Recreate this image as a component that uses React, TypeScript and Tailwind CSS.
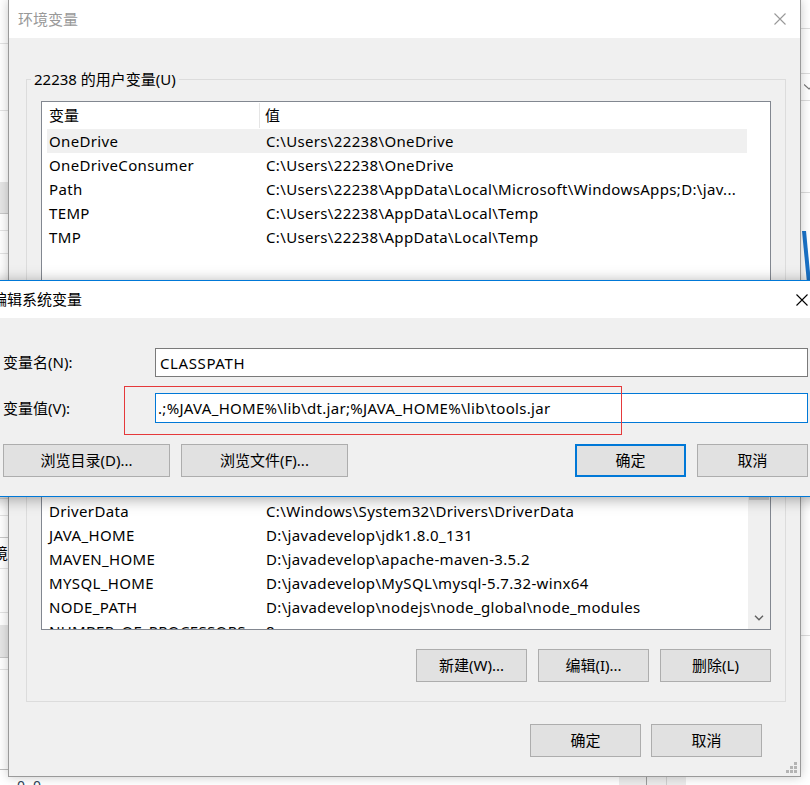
import React from 'react';

const userVars = [
  { name: 'OneDrive', value: 'C:\\Users\\22238\\OneDrive' },
  { name: 'OneDriveConsumer', value: 'C:\\Users\\22238\\OneDrive' },
  { name: 'Path', value: 'C:\\Users\\22238\\AppData\\Local\\Microsoft\\WindowsApps;D:\\jav...' },
  { name: 'TEMP', value: 'C:\\Users\\22238\\AppData\\Local\\Temp' },
  { name: 'TMP', value: 'C:\\Users\\22238\\AppData\\Local\\Temp' },
];

const systemVars = [
  { name: 'ComSpec', value: 'C:\\WINDOWS\\system32\\cmd.exe' },
  { name: 'DriverData', value: 'C:\\Windows\\System32\\Drivers\\DriverData' },
  { name: 'JAVA_HOME', value: 'D:\\javadevelop\\jdk1.8.0_131' },
  { name: 'MAVEN_HOME', value: 'D:\\javadevelop\\apache-maven-3.5.2' },
  { name: 'MYSQL_HOME', value: 'D:\\javadevelop\\MySQL\\mysql-5.7.32-winx64' },
  { name: 'NODE_PATH', value: 'D:\\javadevelop\\nodejs\\node_global\\node_modules' },
  { name: 'NUMBER_OF_PROCESSORS', value: '8' },
  { name: 'OS', value: 'Windows_NT' },
];

function CloseX({ color }: { color: string }) {
  return (
    <svg width="12" height="12" viewBox="0 0 12 12" fill="none" stroke={color} strokeWidth="1.1">
      <path d="M0.5 0.5 L11.5 11.5 M11.5 0.5 L0.5 11.5" />
    </svg>
  );
}

function WinButton({ label, width = 'w-[111px]', primary = false }: { label: string; width?: string; primary?: boolean }) {
  return (
    <button
      className={`${width} h-[33px] bg-[#e1e1e1] text-[15px] text-black flex items-center justify-center ${
        primary ? 'border-2 border-[#0078d7]' : 'border border-[#adadad]'
      }`}
    >
      {label}
    </button>
  );
}

type Row = { name: string; value: string };

function VarList({ rows, selected, scroll, height }: { rows: Row[]; selected?: number; scroll?: boolean; height: string }) {
  return (
    <div className={`${height} border border-[#828790] bg-white flex overflow-hidden`}>
      <div className="flex-1 min-w-0 pl-[5px] overflow-hidden">
        <div className="w-[700px] h-[27px] flex items-center">
          <div className="w-[213px] h-[25px] pl-[2px] flex items-center border-r border-[#e5e5e5]">变量</div>
          <div className="pl-[5px]">值</div>
        </div>
        {rows.map((r, i) => (
          <div
            key={r.name}
            className={`w-[700px] h-[24px] flex items-center whitespace-nowrap tracking-[0.35px] ${i === selected ? 'bg-[#f0f0f0]' : ''}`}
          >
            <div className="w-[217px] pl-[2px] overflow-hidden">{r.name}</div>
            <div className="pl-[2px] overflow-hidden">{r.value}</div>
          </div>
        ))}
      </div>
      <div className={`w-[22px] h-full flex flex-col ${scroll ? 'bg-[#f0f0f0]' : 'bg-white'}`}>
        {scroll && (
          <>
            <div className="h-[22px]" />
            <div className="h-[30px] mx-[1px] bg-[#cdcdcd]" />
            <div className="flex-1" />
            <div className="h-[22px] flex items-center justify-center">
              <svg width="10" height="6" viewBox="0 0 10 6" fill="none" stroke="#606060" strokeWidth="1.4">
                <path d="M1 0.8 L5 4.8 L9 0.8" />
              </svg>
            </div>
          </>
        )}
      </div>
    </div>
  );
}

function LeftBackdrop() {
  return (
    <div className="absolute left-[-200px] top-0 w-[208px] h-[785px] bg-white flex flex-col">
      <div className="h-[44px] border-b border-[#e3e3e3]" />
      <div className="h-[67px] border-b border-[#e3e3e3]" />
      <div className="h-[71px]" />
      <div className="h-[32px] bg-[#e6e6e6] border-b border-[#c8c8c8]" />
      <div className="h-[17px] border-b border-[#e3e3e3]" />
      <div className="h-[23px] border-b border-[#e3e3e3]" />
      <div className="h-[245px] border-b border-[#e3e3e3]" />
      <div className="h-[17px] border-b border-[#e3e3e3]" />
      <div className="h-[22px] border-b border-[#c9c9c9]" />
      <div className="h-[31px] border-b border-[#e3e3e3] flex items-center justify-end text-[15px] text-black">境</div>
      <div className="h-[44px] border-b border-[#e3e3e3]" />
      <div className="h-[12px]" />
      <div className="h-[33px] bg-[#e6e6e6] border-b border-[#c8c8c8]" />
      <div className="h-[12px] border-b border-[#e3e3e3]" />
      <div className="h-[100px] border-b border-[#bdbdbd]" />
    </div>
  );
}

function RightBackdrop() {
  return (
    <div className="absolute left-[801px] top-0 w-[40px] h-[785px] bg-white flex flex-col">
      <div className="h-[29px] border-b border-[#dcdcdc]" />
      <div className="h-[45px] border-b border-[#dcdcdc]" />
      <div className="h-[27px] border-b border-[#dcdcdc] pl-[3px] pt-[10px]">
        <svg width="10" height="6" viewBox="0 0 10 6" fill="none" stroke="#777" strokeWidth="1.2">
          <path d="M0 0.5 L5 5 L10 0.5" />
        </svg>
      </div>
      <div className="h-[92px] border-b border-[#dcdcdc]" />
      <div className="h-[38px]" />
      <svg width="12" height="52" viewBox="0 0 12 52">
        <polygon points="1,0 5,0 10,52 6,52" fill="#1a73c9" />
      </svg>
      <div className="h-[353px] border-b border-[#dcdcdc]" />
    </div>
  );
}

function BottomBackdrop() {
  return (
    <div className="absolute left-0 top-[777px] w-[810px] h-[8px] flex">
      <div className="w-[17px]" />
      <div className="w-[40px] h-[8px] overflow-hidden">
        <div className="text-[14px] leading-[14px] text-[#2b3f57] mt-[2px] tracking-[8px]">00</div>
      </div>
      <div className="w-[562px]" />
      <div className="w-[27px] bg-[#ececec]" />
      <div className="w-[1px] bg-[#9c9c9c]" />
      <div className="w-[19px] bg-[#ececec]" />
      <div className="w-[1px] bg-[#cfcfcf]" />
      <div className="w-[19px] bg-[#ececec]" />
      <div className="flex-1" />
    </div>
  );
}

function EnvDialog() {
  return (
    <div className="absolute left-[8px] top-0 w-[793px] h-[777px] border-x border-b border-[#9a9a9a] bg-[#f0f0f0] shadow-[0_0_10px_rgba(0,0,0,0.22)] flex flex-col">
      <div className="h-[38px] bg-white flex items-center justify-between pl-[9px] text-[#999]">
        <span>环境变量</span>
        <div className="w-[40px] flex justify-center">
          <CloseX color="#999" />
        </div>
      </div>
      <div className="pl-[17px] pr-[14px] flex flex-col">
        <fieldset className="mt-[31px] h-[333px] border border-[#dcdcdc] px-[14px]">
          <legend className="ml-[-10px] px-[3px] leading-[20px]">22238 的用户变量(U)</legend>
          <div className="mt-[12px]">
            <VarList rows={userVars} selected={0} height="h-[220px]" />
          </div>
        </fieldset>
        <fieldset className="mt-[13px] border border-[#dcdcdc] px-[14px] pb-[19px]">
          <legend className="ml-[-10px] px-[3px] leading-[20px]">系统变量(S)</legend>
          <div className="mt-[12px]">
            <VarList rows={systemVars} scroll height="h-[183px]" />
          </div>
          <div className="mt-[19px] flex justify-end gap-[11px]">
            <WinButton label="新建(W)..." />
            <WinButton label="编辑(I)..." />
            <WinButton label="删除(L)" />
          </div>
        </fieldset>
        <div className="mt-[22px] flex justify-end gap-[10px] pr-[24px]">
          <WinButton label="确定" />
          <WinButton label="取消" />
        </div>
      </div>
      <svg className="absolute right-[3px] bottom-[3px]" width="11" height="11" viewBox="0 0 11 11" fill="#b4b4b4">
        <rect x="8" y="0" width="3" height="3" />
        <rect x="4" y="4" width="3" height="3" />
        <rect x="8" y="4" width="3" height="3" />
        <rect x="0" y="8" width="3" height="3" />
        <rect x="4" y="8" width="3" height="3" />
        <rect x="8" y="8" width="3" height="3" />
      </svg>
    </div>
  );
}

function EditDialog() {
  return (
    <div className="absolute left-[-14px] top-[280px] w-[845px] border border-[#0078d7] bg-[#f0f0f0] shadow-[0_2px_14px_rgba(0,0,0,0.35)] flex flex-col">
      <div className="h-[37px] bg-white flex items-center justify-between pl-[5px]">
        <span>编辑系统变量</span>
        <div className="w-[56px] flex justify-center">
          <CloseX color="#000" />
        </div>
      </div>
      <div className="pl-[16px] pr-[22px] pt-[30px] pb-[19px] flex flex-col">
        <div className="h-[29px] flex items-center">
          <div className="w-[152px]">变量名(N):</div>
          <input
            readOnly
            value="CLASSPATH"
            className="flex-1 h-[29px] border border-[#7a7a7a] bg-white pl-[4px] tracking-[0.6px] outline-none"
          />
        </div>
        <div className="mt-[16px] h-[30px] flex items-center">
          <div className="w-[152px]">变量值(V):</div>
          <input
            readOnly
            value=".;%JAVA_HOME%\lib\dt.jar;%JAVA_HOME%\lib\tools.jar"
            className="flex-1 h-[30px] border border-[#0078d7] bg-white pl-[2px] tracking-[0.3px] outline-none"
          />
        </div>
        <div className="mt-[21px] flex items-center">
          <WinButton label="浏览目录(D)..." width="w-[167px]" />
          <div className="ml-[11px]">
            <WinButton label="浏览文件(F)..." width="w-[167px]" />
          </div>
          <div className="flex-1" />
          <WinButton label="确定" primary />
          <div className="ml-[11px]">
            <WinButton label="取消" />
          </div>
        </div>
      </div>
    </div>
  );
}

export default function App() {
  return (
    <div className="relative w-[810px] h-[785px] overflow-hidden bg-white text-[15px] text-black font-['Noto_Sans','Noto_Sans_CJK_SC',sans-serif]">
      <LeftBackdrop />
      <RightBackdrop />
      <BottomBackdrop />
      <EnvDialog />
      <EditDialog />
      {/* red annotation box around the value field */}
      <div className="absolute left-[124px] top-[386px] w-[498px] h-[49px] border border-[#e5393b]" />
    </div>
  );
}
